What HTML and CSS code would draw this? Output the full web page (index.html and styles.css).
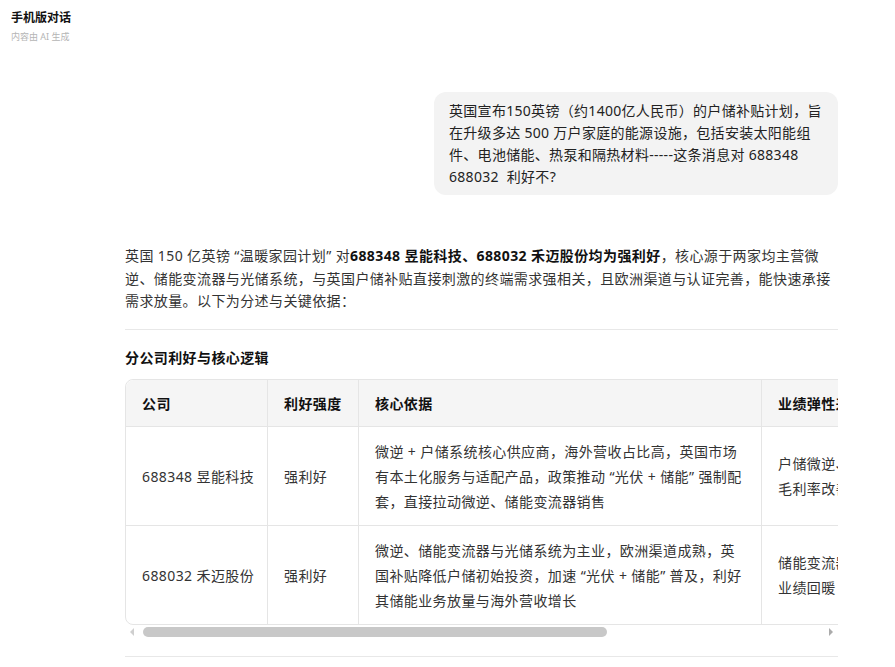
FILE: index.html
```html
<!DOCTYPE html>
<html lang="zh-CN">
<head>
    <meta charset="UTF-8">
    <meta name="viewport" content="width=device-width, initial-scale=1.0">
    <title>手机版对话</title>
    <link rel="stylesheet" href="styles.css">
</head>
<body>
    <header class="top">
        <div class="top-title">手机版对话</div>
        <div class="top-note">内容由 AI 生成</div>
    </header>

    <main class="chat">
        <div class="msg-user">
            <div class="bubble">英国宣布150英镑（约1400亿人民币）的户储补贴计划，旨在升级多达 500 万户家庭的能源设施，包括安装太阳能组件、电池储能、热泵和隔热材料-----这条消息对 688348 688032&nbsp; 利好不?</div>
        </div>

        <div class="answer">
            <p>英国 150 亿英镑 “温暖家园计划” 对<b>688348 昱能科技、688032 禾迈股份均为强利好</b>，核心源于两家均主营微逆、储能变流器与光储系统，与英国户储补贴直接刺激的终端需求强相关，且欧洲渠道与认证完善，能快速承接需求放量。以下为分述与关键依据：</p>
            <hr>
            <h3>分公司利好与核心逻辑</h3>
            <div class="table-scroll">
                <table class="grid">
                    <thead>
                        <tr>
                            <th class="c1">公司</th>
                            <th class="c2">利好强度</th>
                            <th class="c3">核心依据</th>
                            <th class="c4">业绩弹性来源</th>
                            <th class="c5">风险提示</th>
                        </tr>
                    </thead>
                    <tbody>
                        <tr>
                            <td class="nowrap">688348 昱能科技</td>
                            <td>强利好</td>
                            <td>微逆 + 户储系统核心供应商，海外营收占比高，英国市场有本土化服务与适配产品，政策推动 “光伏 + 储能” 强制配套，直接拉动微逆、储能变流器销售</td>
                            <td>户储微逆、储能变流器出货量提升，毛利率改善</td>
                            <td>补贴落地节奏不及预期</td>
                        </tr>
                        <tr>
                            <td class="nowrap">688032 禾迈股份</td>
                            <td>强利好</td>
                            <td>微逆、储能变流器与光储系统为主业，欧洲渠道成熟，英国补贴降低户储初始投资，加速 “光伏 + 储能” 普及，利好其储能业务放量与海外营收增长</td>
                            <td>储能变流器与光储系统出货量增长，业绩回暖</td>
                            <td>行业竞争加剧</td>
                        </tr>
                    </tbody>
                </table>
            </div>
            <div class="hscroll">
                <span class="arrow-left"></span>
                <span class="thumb"></span>
                <span class="arrow-right"></span>
            </div>
            <hr class="end">
        </div>
    </main>
</body>
</html>
```

FILE: styles.css
```css
body {
    margin: 0;
    background-color: #fff;
    color: #222;
    font-family: "Noto Sans", "Noto Sans CJK SC", sans-serif;
}
.top {
    padding: 9px 11px 0;
}
.top-title {
    font-size: 12px;
    font-weight: bold;
    line-height: 18px;
    color: #111;
}
.top-note {
    font-size: 9px;
    line-height: 14px;
    margin-top: 3px;
    color: #b5b5b5;
}
.chat {
    width: 713px;
    margin: 0 0 0 125px;
    padding-top: 48px;
}
.msg-user {
    display: flex;
    justify-content: flex-end;
}
.bubble {
    box-sizing: border-box;
    max-width: 404px;
    background-color: #f3f3f3;
    border-radius: 12px;
    padding: 8px 15px 7px;
    font-size: 14px;
    line-height: 22px;
    letter-spacing: 0.3px;
    color: #222;
}
.answer {
    margin-top: 50px;
    font-size: 14px;
    letter-spacing: 0.4px;
    color: #333;
}
.answer p {
    margin: 0;
    line-height: 22.5px;
}
.answer b {
    color: #111;
}
.answer hr {
    border: none;
    border-top: 1px solid #e8e8e8;
    margin: 16px 0 17px;
}
.answer h3 {
    margin: 0 0 10px;
    font-size: 14px;
    line-height: 22px;
    color: #111;
}
.table-scroll {
    overflow: hidden;
}
.grid {
    width: 1056px;
    border-collapse: separate;
    border-spacing: 0;
    border: 1px solid #e5e5e5;
    border-radius: 8px;
    font-size: 14px;
    table-layout: fixed;
}
.grid th,
.grid td {
    box-sizing: border-box;
    text-align: left;
    vertical-align: middle;
    border-right: 1px solid #e5e5e5;
    border-bottom: 1px solid #e5e5e5;
    padding: 12px 16px 11px;
    line-height: 25px;
}
.grid th {
    background-color: #f5f5f5;
    color: #111;
    font-weight: bold;
    padding: 11px 16px 10px;
}
.grid th:first-child {
    border-top-left-radius: 8px;
}
.grid th:last-child,
.grid td:last-child {
    border-right: none;
}
.grid tbody tr:last-child td {
    border-bottom: none;
}
.grid td {
    color: #333;
}
.grid td.nowrap {
    white-space: nowrap;
}
.c1 { width: 142px; }
.c2 { width: 91px; }
.c3 { width: 403px; }
.c4 { width: 272px; }

/* fake horizontal scrollbar under the table */
.hscroll {
    display: flex;
    align-items: center;
    height: 12px;
    margin-top: 1px;
    padding: 0 5px;
}
.arrow-left {
    width: 0;
    height: 0;
    border-top: 4px solid transparent;
    border-bottom: 4px solid transparent;
    border-right: 4px solid #cfcfcf;
}
.thumb {
    width: 464px;
    height: 10px;
    margin-left: 9px;
    border-radius: 5px;
    background-color: #c8c8c8;
}
.arrow-right {
    width: 0;
    height: 0;
    margin-left: auto;
    border-top: 4px solid transparent;
    border-bottom: 4px solid transparent;
    border-left: 4px solid #ababab;
}
.answer hr.end {
    margin: 18px 0 0;
}
```
